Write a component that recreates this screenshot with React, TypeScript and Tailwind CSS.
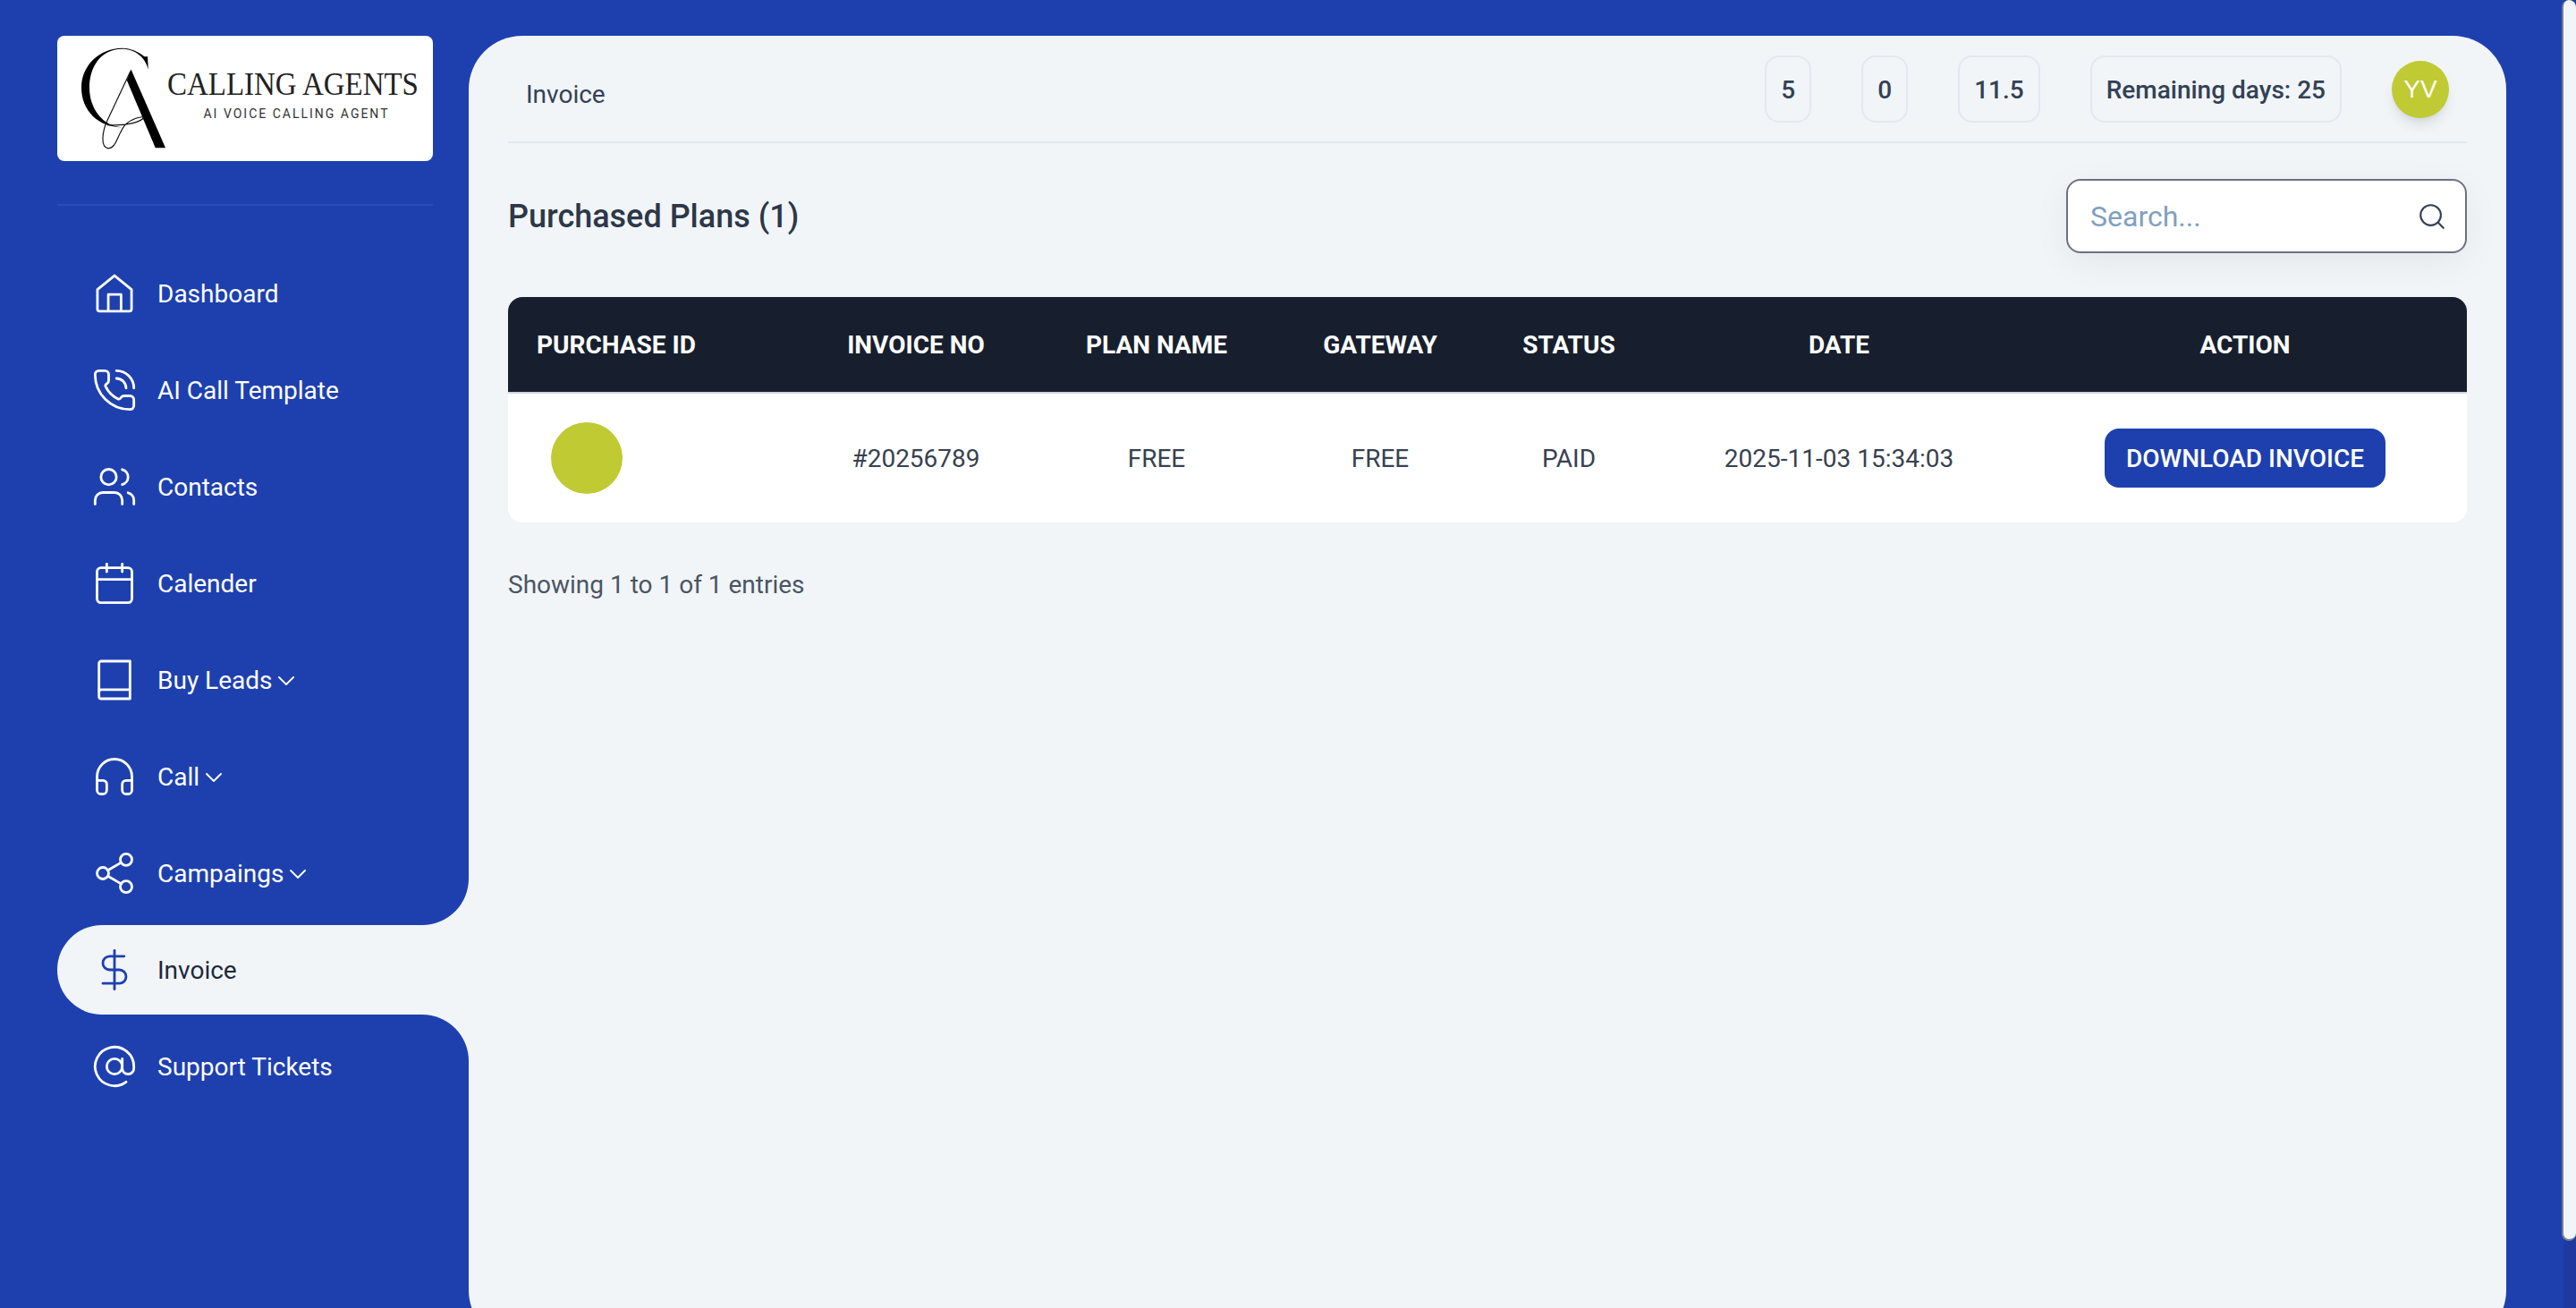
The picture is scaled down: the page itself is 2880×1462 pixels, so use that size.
// src/pages/InvoicePage.tsx
import React from 'react';
import {
    AtSign,
    Calendar,
    ChevronDown,
    DollarSign,
    Headphones,
    PhoneCall,
    Search,
    Share2,
    Users,
} from 'lucide-react';

const HomeIcon = ({ className }: { className?: string }) => (
    <svg viewBox="0 0 24 24" fill="none" stroke="currentColor" strokeWidth="1.3" strokeLinejoin="round" className={className}>
        <path d="M3.200 10L12 2.800L20.800 10V20a1.200 1.200 0 0 1-1.200 1.200H4.400a1.200 1.200 0 0 1-1.200-1.200Z" />
        <path d="M8.800 21.200V12.500H15.400V21.200" />
    </svg>
);

const BookIcon = ({ className }: { className?: string }) => (
    <svg viewBox="0 0 24 24" fill="none" stroke="currentColor" strokeWidth="1.3" strokeLinejoin="round" className={className}>
        <path d="M4 3.500a1.200 1.200 0 0 1 1.200-1.200H20V21.700H5.200A1.200 1.200 0 0 1 4 20.500Z" />
        <path d="M4 18.200A1.200 1.200 0 0 1 5.200 17H20" />
    </svg>
);

const LogoMark = () => (
    <svg viewBox="150 95 292 342" className="w-[97px] h-[114px] shrink-0">
        <path
            d="M378 170C370 130 335 100 290 100C215 100 180 165 180 230C180 300 225 360 290 363C215 365 153 310 153 230C153 155 215 97 290 97C320 97 345 110 365 125L376 125Z"
            fill="#000"
        />
        <path d="M320 168L436 432H402L306 205Z" fill="#000" />
        <path
            d="M318 175L238 345C225 375 215 430 243 434C270 436 275 385 300 355C320 335 355 325 365 330C350 345 310 360 240 355"
            fill="none"
            stroke="#111"
            strokeWidth="3.500"
        />
    </svg>
);

const Logo = () => (
    <div className="flex w-[420px] h-[140px] items-center rounded-lg bg-white pl-[26px]">
        <LogoMark />
        <div className="flex w-[284px] flex-col items-center pb-[7px] text-[#222]">
            <span className="w-[284px] origin-left scale-x-[0.915] whitespace-nowrap font-['Liberation_Serif',serif] text-[36px] leading-[34px]">
                CALLING AGENTS
            </span>
            <span className="mt-[7px] ml-[5px] whitespace-nowrap text-[14px] leading-[18px] tracking-[2px] text-[#333]">
                AI VOICE CALLING AGENT
            </span>
        </div>
    </div>
);

const navIconClass = 'w-[52px] h-[52px] shrink-0';

const navItems = [
    { label: 'Dashboard', icon: <HomeIcon className={navIconClass} /> },
    { label: 'AI Call Template', icon: <PhoneCall strokeWidth={1.3} className={navIconClass} /> },
    { label: 'Contacts', icon: <Users strokeWidth={1.3} className={navIconClass} /> },
    { label: 'Calender', icon: <Calendar strokeWidth={1.3} className={navIconClass} /> },
    { label: 'Buy Leads', icon: <BookIcon className={navIconClass} />, caret: true },
    { label: 'Call', icon: <Headphones strokeWidth={1.3} className={navIconClass} />, caret: true },
    { label: 'Campaings', icon: <Share2 strokeWidth={1.3} className={navIconClass} />, caret: true },
    { label: 'Invoice', icon: <DollarSign strokeWidth={1.3} className={navIconClass} />, active: true },
    { label: 'Support Tickets', icon: <AtSign strokeWidth={1.3} className={navIconClass} /> },
];

const Sidebar = () => (
    <aside className="flex w-[524px] shrink-0 flex-col pl-16">
        <Logo />
        <div className="mt-[48px] mr-10 h-[2px] bg-[#2a4cb5]" />
        <nav className="mt-[48px] flex flex-col gap-2">
            {navItems.map((item) =>
                item.active ? (
                    <div
                        key={item.label}
                        className="relative flex h-[100px] items-center gap-[22px] rounded-l-[52px] bg-[#f1f5f8] pl-[38px] text-[#1e293b]"
                    >
                        <span className="text-[#1e40af]">{item.icon}</span>
                        <span className="pt-[2px]">{item.label}</span>
                        {/* 활성 메뉴 위아래 곡선 */}
                        <span className="absolute right-0 -top-[52px] h-[52px] w-[52px] bg-[#f1f5f8]">
                            <span className="block h-full w-full rounded-br-[52px] bg-[#1e40af]" />
                        </span>
                        <span className="absolute right-0 -bottom-[52px] h-[52px] w-[52px] bg-[#f1f5f8]">
                            <span className="block h-full w-full rounded-tr-[52px] bg-[#1e40af]" />
                        </span>
                    </div>
                ) : (
                    <div key={item.label} className="flex h-[100px] items-center gap-[22px] pl-[38px] text-white">
                        {item.icon}
                        <span className="flex items-center pt-[2px]">
                            {item.label}
                            {item.caret && <ChevronDown strokeWidth={1.4} className="h-8 w-8" />}
                        </span>
                    </div>
                ),
            )}
        </nav>
    </aside>
);

const chipClass =
    'flex h-[75px] items-center rounded-2xl border-2 border-[#e2e8f0] px-4 pt-[2px] font-medium text-[#334155]';

const TopBar = () => (
    <div className="flex h-[120px] items-start justify-between border-b-2 border-[#e2e8f0] pt-[22px]">
        <span className="mt-[24px] pl-5 leading-[40px] text-[#334155]">Invoice</span>
        <div className="flex items-center gap-14 pr-5">
            <div className={chipClass}>5</div>
            <div className={chipClass}>0</div>
            <div className={chipClass}>11.5</div>
            <div className={chipClass}>Remaining days: 25</div>
            <div className="flex h-16 w-16 items-center justify-center rounded-full bg-[#c0ca33] font-['Liberation_Sans',sans-serif] text-white shadow-lg">
                YV
            </div>
        </div>
    </div>
);

const columns = [
    { label: 'PURCHASE ID', width: 'w-[322px]', align: 'text-left pl-8' },
    { label: 'INVOICE NO', width: 'w-[268px]', align: 'text-center' },
    { label: 'PLAN NAME', width: 'w-[270px]', align: 'text-center' },
    { label: 'GATEWAY', width: 'w-[230px]', align: 'text-center' },
    { label: 'STATUS', width: 'w-[192px]', align: 'text-center' },
    { label: 'DATE', width: 'w-[412px]', align: 'text-center' },
    { label: 'ACTION', width: 'w-[496px]', align: 'text-center' },
];

const PlansTable = () => (
    <div className="mt-[49px] overflow-hidden rounded-2xl bg-white">
        <table className="w-full table-fixed border-separate border-spacing-0">
            <thead>
                <tr className="bg-[#171f2e] text-white">
                    {columns.map((col) => (
                        <th
                            key={col.label}
                            className={`${col.width} ${col.align} box-border h-[108px] border-b-2 border-[#d1d5db] pt-[2px] font-bold`}
                        >
                            {col.label}
                        </th>
                    ))}
                </tr>
            </thead>
            <tbody>
                <tr className="h-[144px] text-center text-[#374151]">
                    <td className="pl-12">
                        <div className="h-20 w-20 rounded-full bg-[#c0ca33]" />
                    </td>
                    <td className="pt-[2px]">#20256789</td>
                    <td className="pt-[2px]">FREE</td>
                    <td className="pt-[2px]">FREE</td>
                    <td className="pt-[2px]">PAID</td>
                    <td className="pt-[2px]">2025-11-03 15:34:03</td>
                    <td>
                        <button className="h-[66px] w-[314px] rounded-2xl bg-[#1e40af] pt-[2px] font-medium text-white">
                            DOWNLOAD INVOICE
                        </button>
                    </td>
                </tr>
            </tbody>
        </table>
    </div>
);

const InvoicePage = () => {
    return (
        <div className="relative flex h-[1462px] overflow-hidden bg-[#1e40af] pt-10 font-[Roboto,sans-serif] text-[28px] leading-[40px]">
            <Sidebar />
            <main className="h-[1462px] w-[2278px] shrink-0 rounded-[60px] bg-[#f1f5f8] px-11">
                <TopBar />
                <div className="mt-[40px] flex items-center justify-between">
                    <h2 className="text-[36px] font-medium text-[#2d3748]">Purchased Plans (1)</h2>
                    <div className="flex h-[83px] w-[448px] items-center justify-between rounded-2xl border-2 border-[#6b7280] bg-white pr-[20px] pl-[25px] shadow-[0_10px_40px_rgba(0,0,0,0.06)]">
                        <span className="text-[32px] text-[#7fa0bf]">Search...</span>
                        <Search strokeWidth={1.5} className="h-[34px] w-[34px] text-[#334155]" />
                    </div>
                </div>
                <PlansTable />
                <p className="mt-[50px] text-[#4b5563]">Showing 1 to 1 of 1 entries</p>
            </main>
            {/* 스크롤바 */}
            <div className="absolute top-0 right-0 h-full w-[14px] bg-[#1e3a9e]" />
            <div className="absolute top-0 right-0 h-[1387px] w-4 rounded-lg border-b-2 border-l-2 border-[#718096] bg-[#f1f5f8]" />
        </div>
    );
};

export default InvoicePage;
